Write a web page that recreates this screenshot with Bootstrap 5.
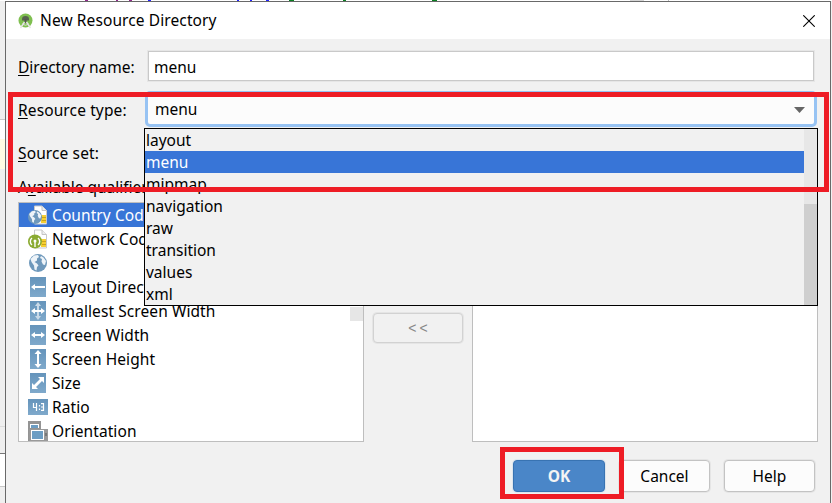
<!DOCTYPE html>
<html lang="en">
<head>
<meta charset="utf-8">
<title>New Resource Directory</title>
<link href="https://cdn.jsdelivr.net/npm/bootstrap@5.3.0/dist/css/bootstrap.min.css" rel="stylesheet">
<style>
body{width:832px;height:503px;overflow:hidden;background:#f1f1f1;font:15.5px/24px "Noto Sans","Open Sans",sans-serif;color:#000}
.edge{width:5px;background:linear-gradient(#efefef 0 118px,#c8c8c8 118px 119px,#fff 119px 138px,#fffbe3 138px 168px,#efefef 168px 425px,#dcdcdc 425px 426px,#efefef 426px 452px,#777 452px 453px,#fff 453px 485px,#c8c8c8 485px 486px,#efefef 486px)}
.editor{height:1px;background:linear-gradient(90deg,#fff 85px,#90298c 85px 88px,#fff 88px 116px,#90298c 116px 118px,#fff 118px 129px,#90298c 129px 132px,#fff 132px 148px,#22f 148px 151px,#fff 151px 237px,#22f 237px 239px,#fff 239px 250px,#22f 250px 252px,#fff 252px 266px,#22f 266px 269px,#fff 269px 289px,#087f20 289px 294px,#fff 294px 343px,#087f20 343px 346px,#fff 346px 432px,#087f20 432px 437px,#fff 437px 630px,#d5d5d5 630px 644px,#fff 644px 668px,#bbb 668px 669px,#fff 669px)}
.dialog{height:503px;border:1px solid #696969;border-width:1px 1px 0;background:#f1f1f1;margin-right:1px}
.titlebar{height:37px;background:#fff;padding:0 15px 0 12px;line-height:37px}
.t-title{letter-spacing:.1px;margin-left:7px}
.lbl{width:130px;flex:none;line-height:30px;padding-top:1px}
.lbl,.opt,.item-name,.heading,.btxt{white-space:nowrap}
.wider{letter-spacing:.12px}
u{text-decoration-thickness:1px;text-underline-offset:2px}
.field{width:666px;height:30px;flex:none;border:1px solid #c9c9c9;background:#fff;padding-left:5px;line-height:30px;box-shadow:0 0 0 1px #e6e6e6}
.combo{width:672px;height:36px;flex:none;margin-left:-3px;border:3px solid #97c3f3;border-radius:5px;background:#fcfcfc;padding:1px 9px 0 7px;line-height:29px}
.pane{border:1px solid #bebebe;background:#fff;overflow:hidden}
.item{height:24px;padding-left:9px}
.item svg{width:20px;height:20px;flex:none;margin-right:4px}
.item-name{letter-spacing:.08px}
.item.picked,.opt.picked{background:#3875d7;color:#fff}
.thumb{width:13px;height:14px;right:0;top:104px;background:#e6e6e6}
.dbtn{height:32px;width:91px;border:1px solid #c3c3c3;border-radius:4px;background:#fcfcfc;box-shadow:0 0 0 1px #e5e5e5;padding:0;line-height:30px;font-size:15.5px;color:#000}
.dbtn.main{background:#4a86c8;border-color:#3873b2;color:#f4f4f4;font-weight:700;width:92px;box-shadow:0 0 0 1px #dde5ee}
.dbtn.dim{background:#f1f1f1;color:#888;height:30px;width:90px;font:14px/28px "Liberation Sans",sans-serif;letter-spacing:3px;padding-left:3px;border-color:#d2d2d2}
.drop{left:144px;top:128px;width:674px;height:178px;border:1px solid #000;background:#f1f1f1}
.opt{height:22px;line-height:22px;padding-left:1px}
.track{width:13px;background:#e7e7e7}
.track div{margin-top:75px;height:101px;background:#cfcfcf}
.ring{border:5px solid #ee1c25}
.r1{left:8px;top:92px;width:821px;height:100px}
.r2{left:500px;top:447px;width:124px;height:52px}
</style>
<script src="https://cdn.jsdelivr.net/npm/bootstrap@5.3.0/dist/js/bootstrap.bundle.min.js"></script>
</head>
<body class="position-relative">
<svg width="0" height="0" class="position-absolute"><defs>
<linearGradient id="g" x2="0" y2="1"><stop stop-color="#6594bb"/><stop offset="1" stop-color="#7fa9cb"/></linearGradient>
<symbol id="globe" viewBox="0 0 18 18"><circle cx="9" cy="9" r="9" fill="#6e98bb"/><path d="M1.500 5L5 1.500l4-.5 1 2-2 1.500v2L5.500 8l2.500 1.500 1.500 2L8 13l-.5 3.500-2-1-.5-4L2.500 8z" fill="#edf3f8"/><path d="M12 2l2.500 1.500L17 7l-1 4-2-.5-1.500-3 .5-2.500-2-1z" fill="#edf3f8"/></symbol>
<symbol id="sheet" viewBox="0 0 20 20"><path d="M6.500 1H14l4.500 4.500V19h-12z" fill="#fff" stroke="#c9c9c9"/><path d="M14 1v4.500h4.500" fill="#eee" stroke="#c4c4c4"/><path d="M13 10h5v8h-5z" fill="#f6cf32"/><path d="M14 12.500h4M14 15.500h4" stroke="#c9a41c"/></symbol>
</defs></svg>
<div class="editor"></div>
<div class="d-flex">
<div class="edge flex-shrink-0"></div>
<main class="dialog flex-grow-1">
 <header class="titlebar d-flex align-items-center">
  <svg width="15" height="16" viewBox="0 0 15 16"><circle cx="7.500" cy="7.500" r="7" fill="#7fbf50"/><path d="M4 6a3.500 3 0 017 0v1.500H4z" fill="#56624f"/><path d="M7.500 6v4" stroke="#555" stroke-width="2"/><path d="M6.500 9L2.500 15M8.500 9l4 6" stroke="#e6e6e6" stroke-width="1.500" fill="none"/><path d="M4 11q3.500 2.500 7 0" stroke="#ddd" fill="none"/></svg>
  <span class="btxt t-title">New Resource Directory</span>
  <svg class="ms-auto" width="12" height="12" viewBox="0 0 12 12"><path d="M.3.300l11.400 11.400M11.700.300L.3 11.700" stroke="#000" stroke-width="1.100"/></svg>
 </header>
 <div class="d-flex" style="padding:12px 0 0 12px"><span class="lbl"><u>D</u>irectory name:</span><div class="field">menu</div></div>
 <div class="d-flex align-items-center" style="padding:9px 0 0 12px"><span class="lbl wider"><u>R</u>esource type:</span><div class="combo d-flex align-items-center"><span>menu</span><svg class="ms-auto" width="11" height="6"><path d="M0 0h11L5.500 6z" fill="#666"/></svg></div></div>
 <div class="ps-1"><div class="ms-2 wider" style="margin-top:10px;line-height:32px"><u>S</u>ource set:</div></div>
 <div class="heading ps-1"><div class="ms-2" style="height:32px;line-height:34px;margin-top:1px">A<u>v</u>ailable qualifiers:</div></div>
 <section class="d-flex" style="padding-left:12px">
  <div class="pane position-relative" style="width:346px;height:240px">
   <div class="item d-flex align-items-center picked"><svg viewBox="0 0 20 20"><use href="#sheet"/><use href="#globe" x="0" y="5" width="14" height="14"/></svg><span class="item-name">Country Code</span></div>
   <div class="item d-flex align-items-center"><svg viewBox="0 0 20 20"><use href="#sheet"/><circle cx="7" cy="12.500" r="7" fill="#8bab32"/><path d="M4 16a4.500 4.500 0 010-7M10 16a4.500 4.500 0 000-7M7 11v7" stroke="#fff" stroke-width="1.400" fill="none"/><circle cx="7" cy="12" r="1.500" fill="#fff"/></svg><span class="item-name">Network Code</span></div>
   <div class="item d-flex align-items-center"><svg viewBox="0 0 20 20"><use href="#globe" x="1" y="1" width="18" height="18"/></svg><span class="item-name">Locale</span></div>
   <div class="item d-flex align-items-center"><svg viewBox="0 0 20 20"><path d="M2 0h16v20H2z" fill="url(#g)"/><path d="M3 10l4-3v2h10v2H7v2z" fill="#fff"/></svg><span class="item-name">Layout Direction</span></div>
   <div class="item d-flex align-items-center"><svg viewBox="0 0 20 20"><path d="M2 0h16v20H2z" fill="url(#g)"/><path d="M10 1l3 4h-2v10h2l-3 4-3-4h2V5H7z" fill="#c8d9e8"/><path d="M3 10l4-3v2h6V7l4 3-4 3v-2H7v2z" fill="#fff"/></svg><span class="item-name">Smallest Screen Width</span></div>
   <div class="item d-flex align-items-center"><svg viewBox="0 0 20 20"><path d="M2 0h16v20H2z" fill="url(#g)"/><path d="M3 10l4-3v2h6V7l4 3-4 3v-2H7v2z" fill="#fff"/></svg><span class="item-name">Screen Width</span></div>
   <div class="item d-flex align-items-center"><svg viewBox="0 0 20 20"><path d="M2 0h16v20H2z" fill="url(#g)"/><path d="M10 1l3.500 4H11v10h2.500L10 19l-3.500-4H9V5H6.500z" fill="#fff"/></svg><span class="item-name">Screen Height</span></div>
   <div class="item d-flex align-items-center"><svg viewBox="0 0 20 20"><path d="M2 0h16v20H2z" fill="url(#g)"/><path d="M16 4v6l-2-2-6 6 2 2H4v-6l2 2 6-6-2-2z" fill="#fff"/></svg><span class="item-name">Size</span></div>
   <div class="item d-flex align-items-center"><svg viewBox="0 0 20 20"><path d="M0 2h20v16H0z" fill="url(#g)"/><path d="M5.500 6v4.500h3.500M8.500 6v8M11.500 8v1.500M11.500 11.500V13M13 6.700h2.500v6.600H13M13 10h2.500" stroke="#fff" stroke-width="1.200" fill="none"/></svg><span class="item-name">Ratio</span></div>
   <div class="item d-flex align-items-center"><svg viewBox="0 0 20 20"><path d="M0 0h13v20H0z" fill="#949494"/><path d="M2 3h9v4H2z" fill="#fff"/><path d="M3 4h7v3H3z" fill="#6c9dc3"/><path d="M1 8h19v12H1z" fill="#999"/><path d="M3 9h13v10H3z" fill="#fff"/><path d="M4 10h11v8H4z" fill="#6c9dc3"/><path d="M18 12v3" stroke="#555"/></svg><span class="item-name">Orientation</span></div>
   <div class="thumb position-absolute"></div>
  </div>
  <div style="width:108px;padding:111px 0 0 9px"><button class="dbtn dim">&lt;&lt;</button></div>
  <div class="pane" style="width:346px;height:240px"></div>
 </section>
 <footer class="d-flex justify-content-end" style="padding:18px 15px 0 0;gap:14px"><button class="dbtn main">OK</button><button class="dbtn">Cancel</button><button class="dbtn">Help</button></footer>
</main>
</div>
<div class="drop position-absolute d-flex">
 <div class="flex-grow-1"><div class="opt">layout</div><div class="opt picked">menu</div><div class="opt">mipmap</div><div class="opt">navigation</div><div class="opt">raw</div><div class="opt">transition</div><div class="opt">values</div><div class="opt">xml</div></div>
 <div class="track"><div></div></div>
</div>
<div class="ring r1 position-absolute"></div>
<div class="ring r2 position-absolute"></div>
</body>
</html>
